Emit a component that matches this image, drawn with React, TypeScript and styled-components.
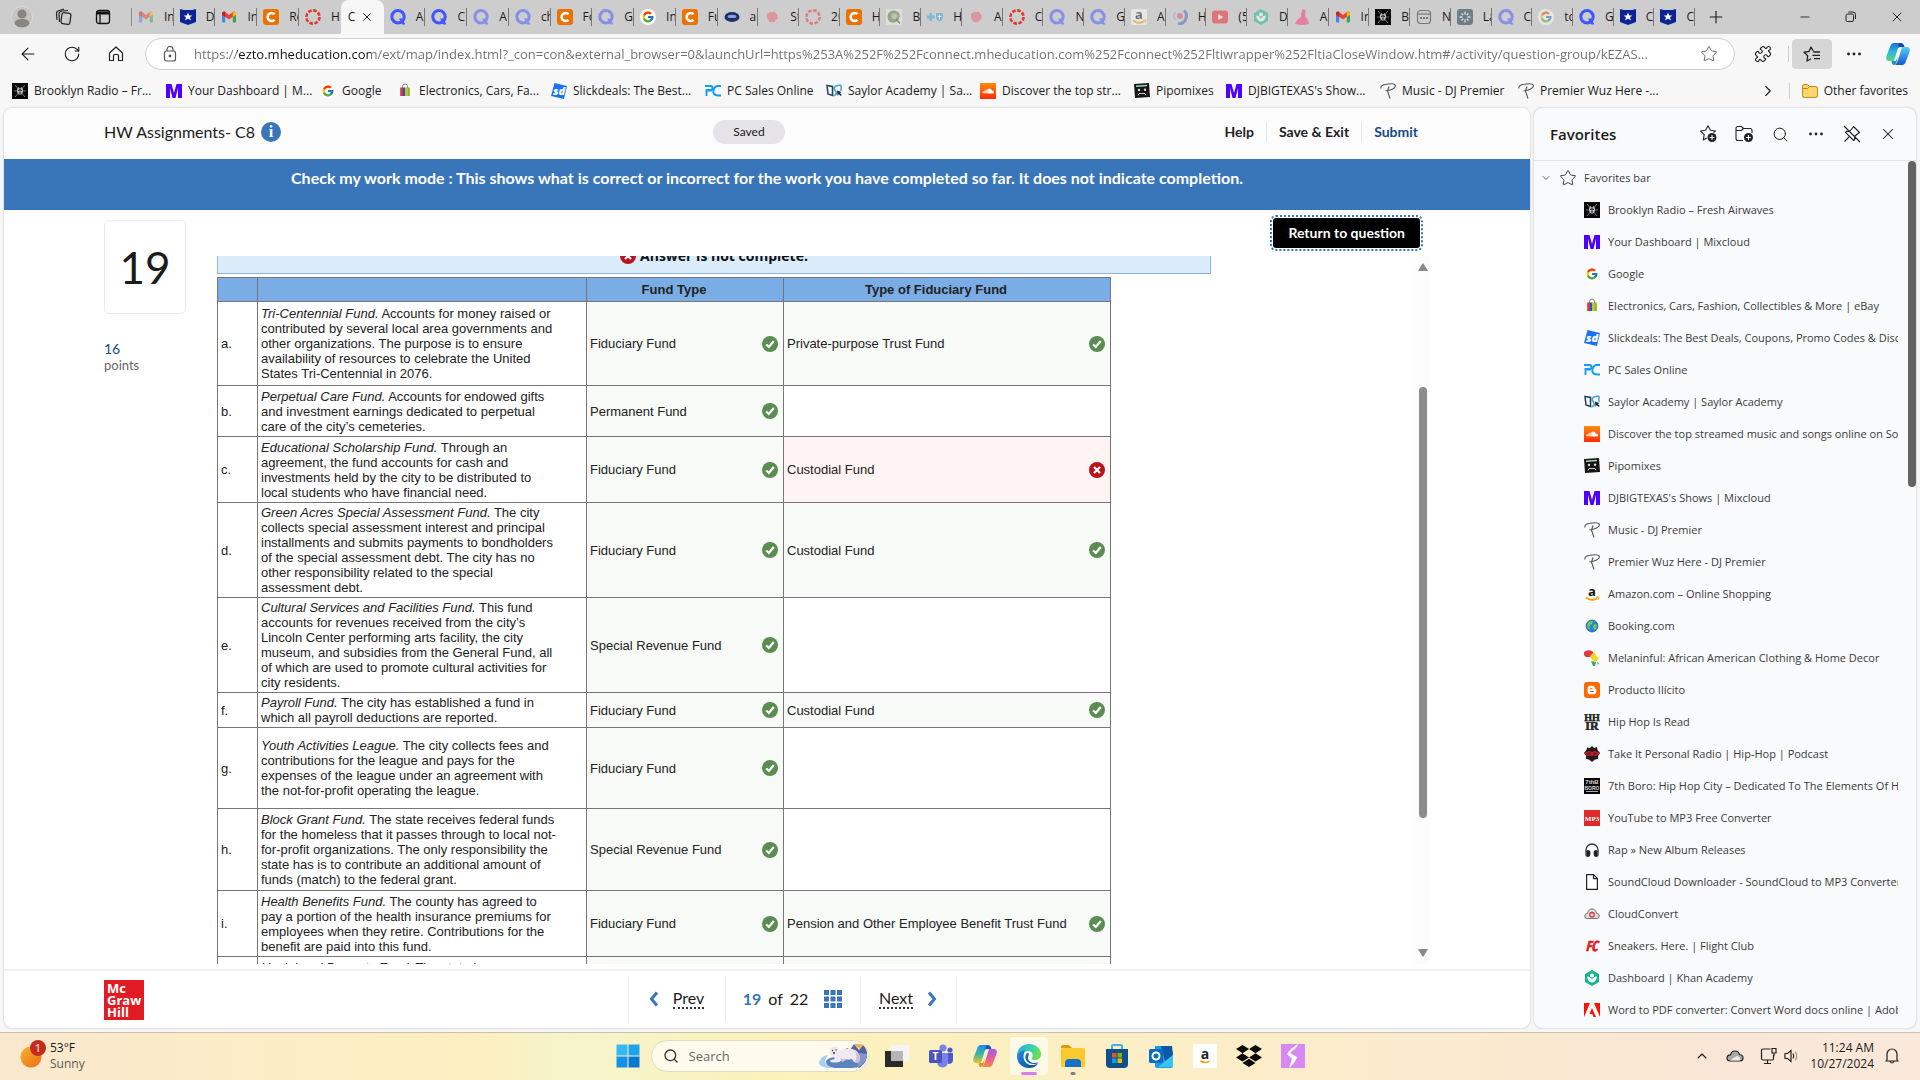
import React from "react";
import styled, { createGlobalStyle } from "styled-components";
import {
  ArrowLeft,
  ChevronDown,
  ChevronRight,
  ChevronUp,
  Headphones,
  Minus,
  Plus,
  Puzzle,
  RotateCw,
  Search,
  Star,
  X,
} from "lucide-react";
import { FcGoogle } from "react-icons/fc";
import { FaBloggerB, FaDropbox, FaSoundcloud } from "react-icons/fa";

const uiFont = `"Open Sans", "Noto Sans", sans-serif`;
const pageFont = `"Lato", "Open Sans", sans-serif`;
const tableFont = `"Liberation Sans", Arial, sans-serif`;

const GlobalStyle = createGlobalStyle`
  * { box-sizing: border-box; }
  body { margin: 0; background: #f7f7f7; color: #1b1b1b; font: 12px/16px ${uiFont}; }
  button { font: inherit; color: inherit; border: 0; padding: 0; background: none; cursor: pointer; }
  a { color: inherit; text-decoration: none; }
  input { font: inherit; border: 0; padding: 0; background: none; outline: 0; }
  h1, h2, p, ul { margin: 0; padding: 0; font: inherit; }
  ul { list-style: none; }
  svg { display: block; flex: none; }
`;

/* ---------- site icons ---------- */

type IconName =
  | "gmail" | "shield" | "chegg" | "canvas" | "quizlet" | "google" | "ellipse" | "brain"
  | "green" | "bcbs" | "amazon" | "swirl" | "youtube" | "khan" | "dress" | "brooklyn"
  | "note" | "grayapp" | "mixcloud" | "ebay" | "slick" | "pc" | "saylor" | "soundcloud"
  | "pipo" | "premier" | "globe" | "africa" | "blogger" | "hiphop" | "personal" | "boro"
  | "mp3" | "phones" | "file" | "cloud" | "flight" | "adobe";

const art: Record<IconName, React.ReactNode> = {
  gmail: (
    <>
      <path d="M1 4.5V12.5q0 1 1 1h2.2V6.5z" fill="#4285f4" />
      <path d="M15 4.5v8q0 1-1 1h-2.2V6.5z" fill="#34a853" />
      <path d="M1 4.6C1 2.7 3 2 4.2 3L8 6l3.8-3C13 2 15 2.7 15 4.6v1L8 10.6 1 5.6z" fill="#ea4335" />
      <path d="M11.8 3C13 2 15 2.7 15 4.6v1.2l-3.2 2.3z" fill="#fbbc04" />
      <path d="M4.2 3C3 2 1 2.7 1 4.6v1.2l3.2 2.3z" fill="#c5221f" />
    </>
  ),
  shield: (
    <>
      <path d="M0 0l4 1h8l4-1v13l-8 3-8-3z" fill="#0b2394" />
      <path d="M8 3.4l1.3 3h3.1L10 8.3l.9 3.2L8 9.6l-2.9 1.9.9-3.2-2.4-1.9h3.1z" fill="#fff" />
    </>
  ),
  chegg: (
    <>
      <rect width="16" height="16" rx="3" fill="#eb7100" />
      <path d="M11.5 5.2A4 4 0 1 0 11.5 10.8" fill="none" stroke="#fff" strokeWidth="2.6" />
    </>
  ),
  canvas: (
    <>
      <circle cx="8" cy="8" r="6.6" fill="none" stroke="#e4372e" strokeWidth="2.6" strokeDasharray="3.6 1.584" />
    </>
  ),
  quizlet: (
    <>
      <circle cx="8" cy="7.7" r="6.2" fill="none" stroke="#4255ff" strokeWidth="3" />
      <path d="M9 9.5h3.4l3 6h-3.2z" fill="#4255ff" />
    </>
  ),
  google: <><circle cx="8" cy="8" r="8" fill="#fff" /><FcGoogle x="1.5" y="1.5" size={13} /></>,
  ellipse: (
    <>
      <ellipse cx="8" cy="8" rx="7.5" ry="5" fill="#1d2f6f" />
      <ellipse cx="8" cy="7.4" rx="4.5" ry="1.6" fill="#8fa0d4" />
    </>
  ),
  brain: (
    <path d="M3 7q-1-3 2-3 1-2 3-1 3-1 4 1.500 2 .5 1.500 3 .5 3-2 3.500-1 3-3.500 2-3 1-3.500-2Q2.500 10 3 7z" fill="#e8626c" />
  ),
  green: (
    <>
      <rect width="16" height="16" fill="#eef0ea" />
      <path d="M3 12C-1 6 4 0 10 2c6 2 4 9 0 11-3 1-5 1-7-1z" fill="#5a8345" />
      <path d="M6.500 4.500q5-1 5 3.500-2 3-5 2-2-3 0-5.500z" fill="#a9bf98" />
      <path d="M10 10l4 4.500" stroke="#444" strokeWidth="1.500" />
    </>
  ),
  bcbs: (
    <>
      <path d="M2.500 4h2.500v2.500h2.500v3H5V12H2.500V9.500H0v-3h2.500z" fill="#33a0d8" />
      <path d="M9 4h7v4q0 3-3.500 4.500Q9 11 9 8z" fill="#33a0d8" />
      <path d="M12.500 5.500v5M10.800 7.500h3.400" stroke="#fff" strokeWidth="1" />
    </>
  ),
  amazon: (
    <>
      <rect width="16" height="16" rx="2" fill="#fff" />
      <text x="8" y="9.500" fontSize="13" fontWeight="700" textAnchor="middle" fill="#111" fontFamily="Open Sans">a</text>
      <path d="M2 11.500q6 4.500 11 .8" fill="none" stroke="#f90" strokeWidth="1.700" />
      <path d="M12 11.200l3-.2-.8 2.800" fill="none" stroke="#f90" strokeWidth="1" />
    </>
  ),
  swirl: (
    <>
      <path d="M12 1.500q4 4 1.500 9T6 14.500" fill="none" stroke="#3d68b8" strokeWidth="3" />
      <path d="M3.500 3q-3 4 0 8" fill="none" stroke="#9fb2dc" strokeWidth="2" />
      <circle cx="8" cy="7" r="3" fill="#e0506e" />
    </>
  ),
  youtube: (
    <>
      <rect y="1.500" width="16" height="13" rx="3" fill="#f01f26" />
      <path d="M6.200 5l5 3-5 3z" fill="#fff" />
    </>
  ),
  khan: (
    <>
      <path d="M8 0l7 4v8l-7 4-7-4V4z" fill="#14b58c" />
      <circle cx="8" cy="5.500" r="2" fill="#fff" />
      <path d="M3 6.500q1 6 5 6t5-6q-4 0-5 3.500-1-3.500-5-3.500z" fill="#fff" />
    </>
  ),
  dress: <path d="M9 0q3 0 2.500 4L11 7q3 3 4 8-6 2-14 0 2-5 6-7V4z" fill="#e77fa2" />,
  brooklyn: (
    <>
      <rect width="16" height="16" fill="#080808" />
      <path d="M3 2l10 12M13 2L3 14M2 8h12" stroke="#8a8a8a" strokeWidth="0.800" />
      <path d="M5 6l1.500-2L8 5.500 9.500 4 11 6v3l-1.500 2.500h-3L5 9z" fill="#bbb" />
      <path d="M6 7.300h1.500M8.500 7.300H10M7 10h2M8 5.500v3" stroke="#111" strokeWidth="1" />
    </>
  ),
  note: (
    <g fill="none" stroke="#777" strokeWidth="1.200">
      <rect x="1.500" y="1.500" width="13" height="13" rx="3" />
      <path d="M1.500 5h13" />
      <path d="M4 9h2M7 9h2M10 9h2" strokeWidth="1.800" />
    </g>
  ),
  grayapp: (
    <>
      <rect width="16" height="16" rx="3" fill="#6f7d87" />
      <path d="M8 2.500v3M8 10.500v3M2.500 8h3M10.500 8h3M4.500 4.500l1.800 1.800M9.700 9.700l1.800 1.800M11.500 4.500L9.700 6.300M6.300 9.700l-1.800 1.800" stroke="#d6dde2" strokeWidth="1.300" />
    </>
  ),
  mixcloud: <path d="M0 1h5.500L8 10l2.500-9H16v14h-4V5L9.500 15h-3L4 5v10H0z" fill="#5000ff" />,
  ebay: (
    <>
      <path d="M5.500 5V3.500a2.500 2.500 0 0 1 5 0V5" fill="none" stroke="#777" strokeWidth="0.900" />
      <path d="M3.200 4.500h2.800V13H3.200z" fill="#e53238" />
      <path d="M6 4.500h2.400V13H6z" fill="#0064d2" />
      <path d="M8.400 4.500h2V13h-2z" fill="#f5af02" />
      <path d="M10.400 4.500h2.400V13h-2.400z" fill="#86b817" />
    </>
  ),
  slick: (
    <>
      <path d="M3.500 0L16 3l-3 13L0 13z" fill="#1b72f2" />
      <text x="8" y="12" fontSize="11" fontWeight="800" fontStyle="italic" textAnchor="middle" fill="#fff" fontFamily="Open Sans">sd</text>
    </>
  ),
  pc: (
    <path d="M0 3h5.500q2 0 2 2t-2 2H1.500v6M16 3h-3q-3.500 0-4.500 4.500T13 12.500h3M1 7.500h6" fill="none" stroke="#129cf3" strokeWidth="1.900" />
  ),
  saylor: (
    <>
      <path d="M1 2.500l5.500 1v9L2 11z" fill="none" stroke="#26405a" strokeWidth="1.500" />
      <path d="M15 2L9.500 3Q7 5.500 9 7.500t1 4L7.500 13" fill="none" stroke="#4aa7cf" strokeWidth="1.700" />
      <path d="M15 2v6" stroke="#4aa7cf" strokeWidth="1.500" />
      <path d="M11 7.500l4.500 1.500-1.500 1 1.700 2-1 1-2-1.800-1.200 1.500z" fill="#1c3046" />
    </>
  ),
  soundcloud: (
    <>
      <defs>
        <linearGradient id="sc" x1="0" y1="0" x2="0" y2="1">
          <stop offset="0" stopColor="#ff8a10" /><stop offset="1" stopColor="#ff2a08" />
        </linearGradient>
      </defs>
      <rect width="16" height="16" fill="url(#sc)" />
      <FaSoundcloud x="2" y="2" size={12} color="#fff" />
    </>
  ),
  pipo: (
    <>
      <path d="M0 1l15-1 1 14-15 1z" fill="#161616" />
      <path d="M2 2.500l11-.8v1.500L2 4z" fill="#9fd8b4" />
      <circle cx="5" cy="7" r="1.200" fill="#ddd" />
      <circle cx="11" cy="6.700" r="1.200" fill="#ddd" />
      <path d="M4 12.500l1-2h6l1 1.800" fill="none" stroke="#ccc" strokeWidth="1" />
    </>
  ),
  premier: (
    <path d="M.8 5.500Q.5 2 6 1.300c5-.8 9-.3 9.400 1.200.3 2.500-4.400 5.200-9.900 5.200M9 3.500L7.500 8l2.500 7.500" fill="none" stroke="#555" strokeWidth="1.100" />
  ),
  globe: (
    <>
      <circle cx="8" cy="8" r="6" fill="#2f7fdc" />
      <path d="M4 5q3-3 5-2l-1 3-3 2 1 4Q2 10 4 5zM10 6l3 1-1 4-2 1-1-3z" fill="#6fce4a" />
      <circle cx="8" cy="8" r="6" fill="none" stroke="#1d6a9e" strokeWidth="0.800" />
    </>
  ),
  africa: (
    <>
      <path d="M0 2q3-3 8-1l2 3-4 3H2Q-1 5 0 2z" fill="#e0393e" />
      <path d="M6 6l4-4 3 5 2 1-3 4-4-2z" fill="#f4d322" />
      <path d="M7 11l5 1-1 4H9zM13 12l2 1-1 2z" fill="#43a35b" />
    </>
  ),
  blogger: (
    <>
      <rect width="16" height="16" rx="3" fill="#ff6a00" />
      <FaBloggerB x="3" y="3" size={10} color="#fff" />
    </>
  ),
  hiphop: (
    <g fontFamily="Liberation Serif" fontWeight="700" fontSize="10" fill="#222" stroke="#222" strokeWidth="0.500" textAnchor="middle">
      <text x="8" y="7">HH</text>
      <text x="8" y="15.500" fontSize="12">IR</text>
    </g>
  ),
  personal: (
    <>
      <path d="M8 0l2 2 3-1 .5 3L16 7l-2 3v3l-3 .5L8 16l-3-2.500L2 13l.2-3L0 7l2.500-3L3 1.500 6 2z" fill="#2a1718" />
      <path d="M0 7l5-2 3 1 3-1 5 2-4 3-4-.5L4 10z" fill="#c0202b" />
      <path d="M4 7.500h2.500M9.500 7.500H12" stroke="#2a1718" strokeWidth="1.500" />
    </>
  ),
  boro: (
    <>
      <rect width="16" height="16" fill="#050505" />
      <g fontFamily="Liberation Sans" fontWeight="700" fontSize="6" fill="#ddd" textAnchor="middle">
        <text x="8" y="6">7thB</text>
        <text x="8" y="11.500" fontSize="5">BORO</text>
      </g>
      <path d="M2 13.500h12" stroke="#aaa" />
    </>
  ),
  mp3: (
    <>
      <rect width="16" height="16" fill="#e02a2a" />
      <text x="8" y="10.500" fontSize="7" fontWeight="700" textAnchor="middle" fill="#fff" fontFamily="Liberation Serif">MP3</text>
    </>
  ),
  phones: (
    <>
      <Headphones width="16" height="16" color="#333" />
      <path d="M3.500 8q3 0 3 3t-2.500 4Q1 13 3.500 8zM12.500 8q-3 0-3 3t2.500 4q3-2 .5-7z" fill="#222" />
    </>
  ),
  file: <path d="M2.600.6h7l3.800 3.800v11H2.600zM9.500.6v4h4" fill="#fff" stroke="#222" strokeWidth="1.200" strokeLinejoin="round" />,
  cloud: (
    <>
      <path d="M3 12.500Q.5 12.500.7 10 1 7.500 3.500 7.300 4.500 3 8 3t4.500 4.300q2.700.2 2.800 2.700 0 2.500-2.300 2.500z" fill="#ddd" stroke="#666" strokeWidth="0.900" />
      <circle cx="8" cy="8.700" r="2.200" fill="none" stroke="#d5393f" strokeWidth="1.300" />
    </>
  ),
  flight: (
    <text x="7.500" y="13" fontSize="14" fontWeight="800" fontStyle="italic" textAnchor="middle" fill="#e11b22" stroke="#e11b22" strokeWidth="0.600" fontFamily="Open Sans Condensed, Open Sans">FC</text>
  ),
  adobe: <path d="M0 1h6L0 15zM16 1h-6l6 14zM8 6l4 9H9.500l-1.200-3H5.500z" fill="#fa1205" />,
};

const Favicon = styled.svg.attrs({ viewBox: "0 0 16 16", "aria-hidden": true })<{ $faded?: boolean }>`
  width: 16px;
  height: 16px;
  opacity: ${(p) => (p.$faded ? 0.5 : 1)};
`;

const Site = ({ name, faded }: { name: IconName; faded?: boolean }) => (
  <Favicon $faded={faded}>{art[name]}</Favicon>
);

/* ---------- browser chrome ---------- */

const Shell = styled.div`
  display: flex;
  flex-direction: column;
  height: 100vh;
  overflow: hidden;
`;

const TabStrip = styled.header`
  display: flex;
  height: 34px;
  background: #cdcdcd;
`;

const StripTools = styled.div`
  display: flex;
  align-items: center;
  gap: 22px;
  width: 132px;
  padding-left: 11px;
  border-right: 1px solid #8b8b8b;
  margin: 8px 0;
`;

const TabRow = styled.nav`
  display: flex;
  flex: 0 1 auto;
  min-width: 0;
`;

const Tab = styled.a<{ $wide: boolean; $last?: boolean }>`
  display: flex;
  align-items: center;
  gap: 10px;
  flex: 0 1 ${(p) => (p.$wide ? 42 : 41)}px;
  min-width: 0;
  margin: 8px 0;
  padding-left: 6px;
  overflow: hidden;
  white-space: nowrap;
  border-right: 1px solid ${(p) => (p.$last ? "transparent" : "#777")};
`;

const ActiveTab = styled.div`
  display: flex;
  align-items: center;
  justify-content: space-between;
  flex: 0 0 43px;
  padding: 0 10px 0 7px;
  border-radius: 8px 8px 0 0;
  background: #f7f7f7;
`;

const WindowControls = styled.div`
  display: flex;
  margin-left: auto;
`;

const StripButton = styled.button<{ $width: number }>`
  display: flex;
  align-items: center;
  justify-content: center;
  width: ${(p) => p.$width}px;
  height: 34px;
`;

const Toolbar = styled.div`
  display: flex;
  align-items: center;
  height: 40px;
  padding-left: 6px;
`;

const ToolButton = styled.button<{ $active?: boolean }>`
  display: flex;
  align-items: center;
  justify-content: center;
  flex: none;
  width: ${(p) => (p.$active ? 40 : 44)}px;
  height: 30px;
  border-radius: 4px;
  background: ${(p) => (p.$active ? "#d6d6d6" : "transparent")};
`;

const AddressBox = styled.label`
  display: flex;
  align-items: center;
  flex: 1;
  gap: 16px;
  min-width: 0;
  height: 32px;
  margin: 0 6px 0 7px;
  padding: 0 16px;
  border: 1px solid #cfcfcf;
  border-radius: 16px;
  background: #fff;
`;

const AddressInput = styled.input`
  flex: 1;
  min-width: 0;
  font-size: 13px;
  line-height: 20px;
  color: #6b6b6b;
  background: linear-gradient(to right, #6f6f6f 43px, #111 43px, #111 177px, #6f6f6f 177px);
  background-clip: text;
  -webkit-background-clip: text;
  -webkit-text-fill-color: transparent;
`;

const Rule = styled.span<{ $height: number; $gap: number }>`
  flex: none;
  width: 1px;
  height: ${(p) => p.$height}px;
  margin: 0 ${(p) => p.$gap}px;
  background: #d0d0d0;
`;

const BookmarkBar = styled.nav`
  display: flex;
  align-items: center;
  height: 34px;
  padding: 0 12px;
`;

const Bookmark = styled.a<{ $width: number }>`
  display: flex;
  align-items: center;
  gap: 6px;
  flex: 0 1 ${(p) => p.$width}px;
  min-width: 0;
  overflow: hidden;
  white-space: nowrap;
`;

const BarEnd = styled.div`
  display: flex;
  align-items: center;
  margin-left: auto;
`;

const FolderLink = styled.button`
  display: flex;
  align-items: center;
  gap: 6px;
`;

/* ---------- assignment page ---------- */

const Workspace = styled.main`
  display: flex;
  flex: 1;
  gap: 4px;
  min-height: 0;
  padding: 0 4px 4px;
`;

const Page = styled.section`
  display: flex;
  flex-direction: column;
  flex: 1;
  min-width: 0;
  overflow: hidden;
  border-radius: 8px;
  background: #fff;
  box-shadow: 0 0 2px #aaa;
  font-family: ${pageFont};
`;

const PageHeader = styled.header`
  display: flex;
  align-items: center;
  justify-content: space-between;
  height: 51px;
  flex: none;
  padding: 0 112px 4px 100px;
  background: #fcfcfc;
`;

const HeaderSide = styled.div<{ $end?: boolean }>`
  display: flex;
  align-items: center;
  flex: 1 1 0;
  justify-content: ${(p) => (p.$end ? "flex-end" : "flex-start")};
`;

const Title = styled.h1`
  margin-right: 6px;
  font-size: 16px;
  line-height: 20px;
`;

const InfoButton = styled.button`
  width: 20px;
  height: 20px;
  border-radius: 10px;
  background: #3a75b9;
  color: #fff;
  font: 700 16px/20px "Liberation Serif", serif;
`;

const SavedPill = styled.span`
  margin-right: 24px;
  padding: 0 20px;
  border-radius: 12px;
  background: #e5e3e7;
  font-size: 12px;
  line-height: 24px;
`;

const HeaderAction = styled.button<{ $blue?: boolean }>`
  padding: 0 12px;
  border-left: 1px solid #e6e6e6;
  font-size: 14px;
  font-weight: 700;
  line-height: 20px;
  color: ${(p) => (p.$blue ? "#164a8c" : "#222")};
  &:first-child { border-left: 0; }
  &:last-child { padding-right: 0; }
`;

const Banner = styled.p`
  flex: none;
  height: 51px;
  padding-top: 9px;
  background: #3875b9;
  color: #fff;
  text-align: center;
  font-size: 16px;
  font-weight: 700;
  line-height: 20px;
`;

const Question = styled.div`
  display: flex;
  flex: 1;
  gap: 31px;
  min-height: 0;
  padding: 0 100px 5px;
`;

const QuestionInfo = styled.aside`
  flex: none;
  width: 82px;
  padding-top: 10px;
`;

const NumberBox = styled.div`
  display: flex;
  align-items: center;
  justify-content: center;
  height: 94px;
  margin-bottom: 26px;
  border: 1px solid #ececec;
  border-radius: 5px;
  font-size: 44px;
`;

const Points = styled.p<{ $strong?: boolean }>`
  font-size: ${(p) => (p.$strong ? 14 : 13)}px;
  line-height: 17px;
  color: ${(p) => (p.$strong ? "#164a8c" : "#666")};
`;

const QuestionBody = styled.div`
  display: flex;
  flex-direction: column;
  flex: 1;
  min-width: 0;
`;

const ReturnRow = styled.div`
  display: flex;
  justify-content: flex-end;
  flex: none;
  height: 46px;
  padding: 8px 10px 8px 0;
`;

const ReturnButton = styled.button`
  padding: 0 15px;
  border-radius: 3px;
  outline: 2px dotted #3875b9;
  outline-offset: 1px;
  background: #000;
  color: #fff;
  font-size: 14px;
  font-weight: 700;
`;

const Scroller = styled.div`
  display: flex;
  justify-content: space-between;
  flex: 1;
  min-height: 0;
`;

const ScrollContent = styled.div`
  flex: 0 1 994px;
  min-width: 0;
  overflow: hidden;
`;

const Alert = styled.p`
  display: flex;
  align-items: center;
  justify-content: center;
  gap: 4px;
  height: 36px;
  margin: -18px 0 3px;
  border: 1px solid #8fb4dc;
  background: #daecfa;
  font: 700 14px/20px ${uiFont};
  color: #111;
`;

const ScrollTrack = styled.div`
  display: flex;
  flex-direction: column;
  align-items: center;
  flex: none;
  width: 15px;
  padding: 7px 0;
  background: #fcfcfc;
`;

const ScrollThumb = styled.div`
  width: 8px;
  margin: 116px 0 auto;
  flex: 0 0 431px;
  border-radius: 4px;
  background: #8c8c8c;
`;

const FundTable = styled.table`
  width: 893px;
  border-collapse: collapse;
  table-layout: fixed;
  font: 13px/15px ${tableFont};
  color: #222;
`;

const HeadCell = styled.th<{ $width: number }>`
  width: ${(p) => p.$width}px;
  height: 24px;
  padding: 0 22px 0 0;
  border: 1px solid #767676;
  background: #7aace6;
`;

const FundRow = styled.tr<{ $height: number }>`
  height: ${(p) => p.$height}px;
`;

const TextCell = styled.td`
  padding: 0 26px 0 3px;
  border: 1px solid #767676;
  &:first-child { padding-right: 0; }
`;

const AnswerCell = styled.td<{ $state?: "right" | "wrong" }>`
  padding: 0 5px 0 3px;
  border: 1px solid #767676;
  background: ${(p) =>
    p.$state === "right" ? "#f7faf7" : p.$state === "wrong" ? "#fff4f3" : "#fff"};
`;

const Answer = styled.div`
  display: flex;
  align-items: center;
  justify-content: space-between;
`;

const PageFooter = styled.footer`
  display: flex;
  align-items: center;
  flex: none;
  height: 59px;
  padding: 0 90px 0 100px;
  border-top: 2px solid #f0f0f0;
`;

const Brand = styled.a`
  width: 40px;
  height: 40px;
  padding: 2px 0 0 3px;
  background: #e21a23;
  color: #fff;
  font: 700 13px/12px ${uiFont};
`;

const Pager = styled.nav`
  display: flex;
  justify-content: center;
  flex: 1;
  padding-bottom: 2px;
`;

const PagerCell = styled.div<{ $width: number }>`
  display: flex;
  align-items: center;
  justify-content: center;
  gap: 16px;
  width: ${(p) => p.$width}px;
  height: 44px;
  border-left: 1px solid #eee;
  font-size: 16px;
  &:last-child { border-right: 1px solid #eee; }
`;

const PagerButton = styled.button`
  display: flex;
  align-items: center;
  gap: 14px;
  line-height: 20px;
`;

const Dotted = styled.span`
  border-bottom: 2px dotted #333;
  line-height: 18px;
`;

const Count = styled.span`
  display: flex;
  gap: 7px;
`;

const Current = styled.b`
  color: #3875b9;
`;

/* ---------- favorites pane ---------- */

const Pane = styled.aside`
  display: flex;
  flex-direction: column;
  flex: none;
  width: 382px;
  overflow: hidden;
  border-radius: 8px;
  background: #f9fafc;
  box-shadow: 0 0 2px #aaa;
`;

const PaneHeader = styled.header`
  display: flex;
  align-items: center;
  flex: none;
  height: 53px;
  padding: 0 10px 0 16px;
  border-bottom: 1px solid #e3e3e3;
`;

const PaneTitle = styled.h2`
  margin-right: auto;
  font-size: 15px;
  font-weight: 600;
  line-height: 20px;
`;

const PaneButton = styled.button`
  display: flex;
  align-items: center;
  justify-content: center;
  width: 36px;
  height: 32px;
`;

const PaneBody = styled.div`
  display: flex;
  flex: 1;
  min-height: 0;
`;

const FavoriteList = styled.ul`
  flex: 1;
  min-width: 0;
  padding-right: 10px;
  overflow: hidden;
  font-size: 11px;
`;

const Favorite = styled.li`
  padding-left: 50px;
`;

const FavoriteLink = styled.a`
  display: flex;
  align-items: center;
  gap: 8px;
  height: 32px;
  overflow: hidden;
  white-space: nowrap;
  color: #3a3a3a;
`;

const FolderToggle = styled.button`
  display: flex;
  align-items: center;
  gap: 7px;
  height: 33px;
  padding-left: 6px;
  color: #3a3a3a;
`;

const PaneThumb = styled.div`
  flex: none;
  width: 8px;
  height: 326px;
  border-radius: 4px;
  background: #636363;
`;

/* ---------- taskbar ---------- */

const Taskbar = styled.footer`
  display: flex;
  align-items: center;
  flex: none;
  height: 48px;
  padding-bottom: 2px;
  border-top: 1px solid #c9c2ae;
  background: linear-gradient(90deg, #fae8cd 0%, #fdefc1 25%, #f5f4cc 30%, #fbf2bb 40%, #fcedc9 65%, #f9e6d6 90%, #fae9da 100%);
`;

const TaskSide = styled.div<{ $end?: boolean }>`
  display: flex;
  align-items: center;
  flex: 1 1 0;
  gap: ${(p) => (p.$end ? 10 : 3)}px;
  padding: 0 20px 0 19px;
  justify-content: ${(p) => (p.$end ? "flex-end" : "flex-start")};
`;

const Stack = styled.div<{ $end?: boolean }>`
  text-align: ${(p) => (p.$end ? "right" : "left")};
  white-space: nowrap;
`;

const Muted = styled.div`
  color: #5d5a52;
`;

const TaskApps = styled.nav`
  display: flex;
  align-items: center;
`;

const AppButton = styled.button<{ $active?: boolean }>`
  display: flex;
  align-items: center;
  justify-content: center;
  width: 38px;
  height: 38px;
  margin: 0 3px;
  border-radius: 4px;
  background: ${(p) => (p.$active ? "rgba(255, 255, 255, 0.6)" : "none")};
`;

const AppArt = styled.svg.attrs({ viewBox: "0 0 24 24", "aria-hidden": true })`
  width: 24px;
  height: 24px;
  overflow: visible;
`;

const SearchBox = styled.label`
  display: flex;
  align-items: center;
  gap: 10px;
  width: 218px;
  height: 32px;
  margin: 0 6px 0 1px;
  padding-left: 11px;
  border: 1px solid #e3dcc4;
  border-radius: 16px;
  background: #fefbec;
`;

const SearchInput = styled.input`
  flex: 1;
  min-width: 0;
  font-size: 13px;
  &::placeholder { color: #666; opacity: 1; }
`;

const HiddenLabel = styled.span`
  position: absolute;
  width: 1px;
  height: 1px;
  overflow: hidden;
  clip-path: inset(50%);
`;

/* ---------- data ---------- */

type TabInfo = [IconName, string, boolean?];

const tabsBefore: TabInfo[] = [
  ["gmail", "In", true], ["shield", "D"], ["gmail", "In"], ["chegg", "Re"], ["canvas", "H"],
];

const tabsAfter: TabInfo[] = [
  ["quizlet", "A"], ["quizlet", "C"], ["quizlet", "A", true], ["quizlet", "ch", true],
  ["chegg", "Fo"], ["quizlet", "G", true], ["google", "In"], ["chegg", "Fu"],
  ["ellipse", "a"], ["brain", "St", true], ["canvas", "20", true], ["chegg", "H"],
  ["green", "B", true], ["bcbs", "H", true], ["brain", "A", true], ["canvas", "C"],
  ["quizlet", "N", true], ["quizlet", "G", true], ["amazon", "A", true], ["swirl", "H", true],
  ["youtube", "(5", true], ["khan", "D", true], ["dress", "A"], ["gmail", "In"],
  ["brooklyn", "B"], ["note", "N"], ["grayapp", "La"], ["quizlet", "C", true],
  ["google", "to", true], ["quizlet", "G"], ["shield", "C"], ["shield", "C"],
];

const bookmarks: [IconName, string, number][] = [
  ["brooklyn", "Brooklyn Radio – Fr...", 154],
  ["mixcloud", "Your Dashboard | M...", 154],
  ["google", "Google", 77],
  ["ebay", "Electronics, Cars, Fa...", 154],
  ["slick", "Slickdeals: The Best...", 154],
  ["pc", "PC Sales Online", 121],
  ["saylor", "Saylor Academy | Sa...", 154],
  ["soundcloud", "Discover the top str...", 154],
  ["pipo", "Pipomixes", 92],
  ["mixcloud", "DJBIGTEXAS's Show...", 154],
  ["premier", "Music - DJ Premier", 138],
  ["premier", "Premier Wuz Here -...", 154],
];

const favorites: [IconName, string][] = [
  ["brooklyn", "Brooklyn Radio – Fresh Airwaves"],
  ["mixcloud", "Your Dashboard | Mixcloud"],
  ["google", "Google"],
  ["ebay", "Electronics, Cars, Fashion, Collectibles & More | eBay"],
  ["slick", "Slickdeals: The Best Deals, Coupons, Promo Codes & Discounts"],
  ["pc", "PC Sales Online"],
  ["saylor", "Saylor Academy | Saylor Academy"],
  ["soundcloud", "Discover the top streamed music and songs online on SoundCloud"],
  ["pipo", "Pipomixes"],
  ["mixcloud", "DJBIGTEXAS's Shows | Mixcloud"],
  ["premier", "Music - DJ Premier"],
  ["premier", "Premier Wuz Here - DJ Premier"],
  ["amazon", "Amazon.com – Online Shopping"],
  ["globe", "Booking.com"],
  ["africa", "Melaninful: African American Clothing & Home Decor"],
  ["blogger", "Producto Ilícito"],
  ["hiphop", "Hip Hop Is Read"],
  ["personal", "Take It Personal Radio | Hip-Hop | Podcast"],
  ["boro", "7th Boro: Hip Hop City – Dedicated To The Elements Of Hip Hop"],
  ["mp3", "YouTube to MP3 Free Converter"],
  ["phones", "Rap » New Album Releases"],
  ["file", "SoundCloud Downloader - SoundCloud to MP3 Converter"],
  ["cloud", "CloudConvert"],
  ["flight", "Sneakers. Here. | Flight Club"],
  ["khan", "Dashboard | Khan Academy"],
  ["adobe", "Word to PDF converter: Convert Word docs online | Adobe"],
];

interface Fund {
  id: string;
  name: string;
  text: string;
  type: string;
  fiduciary?: string;
  wrong?: boolean;
  height: number;
}

const funds: Fund[] = [
  { id: "a.", name: "Tri-Centennial Fund.", text: "Accounts for money raised or contributed by several local area governments and other organizations. The purpose is to ensure availability of resources to celebrate the United States Tri-Centennial in 2076.", type: "Fiduciary Fund", fiduciary: "Private-purpose Trust Fund", height: 84 },
  { id: "b.", name: "Perpetual Care Fund.", text: "Accounts for endowed gifts and investment earnings dedicated to perpetual care of the city’s cemeteries.", type: "Permanent Fund", height: 51 },
  { id: "c.", name: "Educational Scholarship Fund.", text: "Through an agreement, the fund accounts for cash and investments held by the city to be distributed to local students who have financial need.", type: "Fiduciary Fund", fiduciary: "Custodial Fund", wrong: true, height: 66 },
  { id: "d.", name: "Green Acres Special Assessment Fund.", text: "The city collects special assessment interest and principal installments and submits payments to bondholders of the special assessment debt. The city has no other responsibility related to the special assessment debt.", type: "Fiduciary Fund", fiduciary: "Custodial Fund", height: 95 },
  { id: "e.", name: "Cultural Services and Facilities Fund.", text: "This fund accounts for revenues received from the city’s Lincoln Center performing arts facility, the city museum, and subsidies from the General Fund, all of which are used to promote cultural activities for city residents.", type: "Special Revenue Fund", height: 95 },
  { id: "f.", name: "Payroll Fund.", text: "The city has established a fund in which all payroll deductions are reported.", type: "Fiduciary Fund", fiduciary: "Custodial Fund", height: 35 },
  { id: "g.", name: "Youth Activities League.", text: "The city collects fees and contributions for the league and pays for the expenses of the league under an agreement with the not-for-profit operating the league.", type: "Fiduciary Fund", height: 81 },
  { id: "h.", name: "Block Grant Fund.", text: "The state receives federal funds for the homeless that it passes through to local not-for-profit organizations. The only responsibility the state has is to contribute an additional amount of funds (match) to the federal grant.", type: "Special Revenue Fund", height: 82 },
  { id: "i.", name: "Health Benefits Fund.", text: "The county has agreed to pay a portion of the health insurance premiums for employees when they retire. Contributions for the benefit are paid into this fund.", type: "Fiduciary Fund", fiduciary: "Pension and Other Employee Benefit Trust Fund", height: 66 },
];

const url =
  "https://ezto.mheducation.com/ext/map/index.html?_con=con&external_browser=0&launchUrl=https%253A%252F%252Fconnect.mheducation.com%252Fconnect%252Fltiwrapper%252FltiaCloseWindow.htm#/activity/question-group/kEZAS...";

/* ---------- small drawings ---------- */

const Mark = ({ wrong }: { wrong?: boolean }) => (
  <svg width="16" height="16" viewBox="0 0 16 16" role="img" aria-label={wrong ? "incorrect" : "correct"}>
    <circle cx="8" cy="8" r="8" fill={wrong ? "#b8121b" : "#5b8c51"} />
    <path
      d={wrong ? "M5 5l6 6M11 5l-6 6" : "M4.200 8.500l2.600 2.500 5-6"}
      fill="none"
      stroke="#fff"
      strokeWidth="2.200"
    />
  </svg>
);

const Chevron = ({ flip }: { flip?: boolean }) => (
  <svg width="10" height="16" viewBox="0 0 10 16" aria-hidden="true">
    <path d={flip ? "M2 1.500L7.500 8 2 14.500" : "M8 1.500L2.500 8 8 14.500"} fill="none" stroke="#3875b9" strokeWidth="3" />
  </svg>
);

const Arrow = ({ down }: { down?: boolean }) => (
  <svg width="10" height="8" viewBox="0 0 10 8" aria-hidden="true">
    <path d={down ? "M0 0h10L5.500 7.500h-1z" : "M0 8h10L5.500 .5h-1z"} fill="#8a8a8a" />
  </svg>
);

const Dots = () => (
  <svg width="16" height="16" viewBox="0 0 16 16" aria-hidden="true" fill="#222">
    <circle cx="2.500" cy="8" r="1.400" />
    <circle cx="8" cy="8" r="1.400" />
    <circle cx="13.500" cy="8" r="1.400" />
  </svg>
);

const Restore = () => (
  <svg width="12" height="12" viewBox="0 0 12 12" aria-hidden="true" fill="none" stroke="#222">
    <rect x="1" y="3" width="7.500" height="7.500" rx="1.500" />
    <path d="M3.500 1h4.500q2.500 0 2.500 2.500V8" />
  </svg>
);

const CopilotArt = () => (
  <>
    <defs>
      <linearGradient id="cpA" x1="0" y1="0" x2="0" y2="1">
        <stop offset="0" stopColor="#1e8df0" /><stop offset="0.5" stopColor="#38b6a5" /><stop offset="1" stopColor="#e8c52e" />
      </linearGradient>
      <linearGradient id="cpB" x1="0" y1="0" x2="0" y2="1">
        <stop offset="0" stopColor="#9a5cf0" /><stop offset="0.6" stopColor="#ee5d91" /><stop offset="1" stopColor="#f98b3c" />
      </linearGradient>
    </defs>
    <path d="M15 1H8Q5 1 4 5L.5 14q-1.500 5 3 5H8l4-13q.8-3 3-5z" fill="url(#cpA)" />
    <path d="M9 23h7q3 0 4-4l3.500-9q1.500-5-3-5H16l-4 13q-.8 3-3 5z" fill="url(#cpB)" />
    <path d="M13 1h2q2.500 0 3.500 4H14q-2 0-2.500 2z" fill="#1856c9" />
    <path d="M5.500 19H10l1.500-4q-.5 8-4 8-1.500 0-2-4z" fill="#f08a2c" />
  </>
);

const ToolbarCopilotArt = () => (
  <>
    <defs>
      <linearGradient id="tcA" x1="0" y1="0" x2="0" y2="1">
        <stop offset="0" stopColor="#1a6fd1" /><stop offset="0.5" stopColor="#2ab8dc" /><stop offset="1" stopColor="#5ad67b" />
      </linearGradient>
      <linearGradient id="tcB" x1="0" y1="0" x2="0" y2="1">
        <stop offset="0" stopColor="#58d0f0" /><stop offset="1" stopColor="#1557d6" />
      </linearGradient>
    </defs>
    <path d="M15 1H8Q5 1 4 5L.5 14q-1.500 5 3 5H8l4-13q.8-3 3-5z" fill="url(#tcA)" />
    <path d="M9 23h7q3 0 4-4l3.500-9q1.500-5-3-5H16l-4 13q-.8 3-3 5z" fill="url(#tcB)" />
    <path d="M13 1h2q2.500 0 3.500 4H14q-2 0-2.500 2z" fill="#1448a8" />
    <path d="M5.500 19H10l1.500-4q-.5 8-4 8-1.500 0-2-4z" fill="#1a8fb8" />
  </>
);

const EdgeArt = () => (
  <>
    <defs>
      <linearGradient id="edA" x1="0" y1="0" x2="1" y2="0.300">
        <stop offset="0" stopColor="#2aa6e8" /><stop offset="0.6" stopColor="#36cfb5" /><stop offset="1" stopColor="#68df4f" />
      </linearGradient>
      <linearGradient id="edB" x1="0" y1="0" x2="1" y2="1">
        <stop offset="0" stopColor="#1b8ee0" /><stop offset="1" stopColor="#0c4a94" />
      </linearGradient>
    </defs>
    <path d="M0 12C0 4 6 0 12 0c7 0 12 5 12 10 0 4-3 6-6 6-3 0-4-1-3-2 2-3 0-7-4-7-6 0-10 3-11 5z" fill="url(#edA)" />
    <path d="M0 12C1 8 5 6 9 6.500c-3 2-4 9 1 13 4 3 9 1 11 0-2 3-5 4.500-9 4.500C4 24 0 18 0 12z" fill="url(#edB)" />
    <path d="M10 9c-4 5 0 12 8 11 2 0 4-1.500 3-1.500-5 1.500-10-.5-10-5 0-2 1-3 1-4z" fill="#1466b8" />
  </>
);

const appArt: { label: string; art: React.ReactNode; active?: boolean }[] = [
  {
    label: "Task view",
    art: <><path d="M0 7h18v16H0z" fill="#2a2a2a" /><path d="M6 1h18v16H6z" fill="#f4f4f4" /><path d="M6 7h12v10H6z" fill="#b5b5b5" /></>,
  },
  {
    label: "Teams",
    art: (
      <>
        <circle cx="14" cy="4" r="3.600" fill="#7b83eb" /><circle cx="21" cy="6" r="2.600" fill="#5059c9" />
        <path d="M8 9h11v8q0 6-5.500 6.500Q8 23 8 17z" fill="#7b83eb" /><path d="M19 9h5v7q0 4-5 4z" fill="#5059c9" />
        <rect y="6" width="13" height="13" rx="1.500" fill="#4b53bc" />
        <text x="6.500" y="16" fontSize="10" fontWeight="700" textAnchor="middle" fill="#fff" fontFamily="Open Sans">T</text>
      </>
    ),
  },
  { label: "Copilot", art: <CopilotArt /> },
  { label: "Edge", active: true, art: <><EdgeArt /><rect x="4" y="28" width="16" height="3" rx="1.500" fill="#d67ff0" /></> },
  {
    label: "File Explorer",
    art: (
      <>
        <path d="M0 3q0-2 2-2h6l3 3H0z" fill="#d99a0b" /><rect y="4" width="24" height="19" rx="1.500" fill="#fdc82f" />
        <path d="M4 23v-4q0-4 4-4h8q4 0 4 4v4z" fill="#1472c6" /><rect x="9.500" y="28" width="5" height="3" rx="1.500" fill="#857e70" />
      </>
    ),
  },
  {
    label: "Store",
    art: (
      <>
        <path d="M7 6V2q0-1 1-1h8q1 0 1 1v4" fill="none" stroke="#3cb4e8" strokeWidth="2" />
        <path d="M1 5h22v15q0 4-4 4H5q-4 0-4-4z" fill="#0f4f8c" />
        <path d="M7 9h4.500v4.500H7z" fill="#f25022" /><path d="M12.500 9H17v4.500h-4.500z" fill="#7fba00" />
        <path d="M7 14.500h4.500V19H7z" fill="#00a4ef" /><path d="M12.500 14.500H17V19h-4.500z" fill="#ffb900" />
      </>
    ),
  },
  {
    label: "Outlook",
    art: (
      <>
        <path d="M6 2h13l5 6v14q0 2-2 2H8q-2 0-2-2z" fill="#1c9be6" /><path d="M12 2h11l1 9-8 6z" fill="#0c59a8" />
        <path d="M24 11v12H9z" fill="#35c4f3" /><rect y="5" width="14" height="14" rx="1.500" fill="#0f6cbd" />
        <circle cx="7" cy="12" r="3.500" fill="none" stroke="#fff" strokeWidth="2" />
      </>
    ),
  },
  {
    label: "Amazon",
    art: <><rect width="24" height="24" rx="1" fill="#fff" /><text x="12" y="15" fontSize="14" fontWeight="700" textAnchor="middle" fill="#222" fontFamily="Open Sans">a</text><path d="M7.500 17q5 3 9 0" fill="none" stroke="#f90" strokeWidth="1.500" /></>,
  },
  { label: "Dropbox", art: <FaDropbox size={26} x="-1" y="-1" color="#0a0a0a" /> },
  {
    label: "Shortcut",
    art: <><rect width="24" height="24" fill="#d888f3" /><path d="M17 0q-1 4-6 7l-2 2 7 4q-1 5-8 11l3-9-5-5q4-6 11-10z" fill="#fff" /></>,
  },
];

/* ---------- page ---------- */

const TabLink = ({ tab, wide, last }: { tab: TabInfo; wide: boolean; last?: boolean }) => (
  <Tab href="#" $wide={wide} $last={last}>
    <Site name={tab[0]} faded={tab[2]} />
    <span>{tab[1]}</span>
  </Tab>
);

const BrowserChrome = () => (
  <>
    <TabStrip>
      <StripTools>
        <svg width="22" height="22" viewBox="0 0 22 22" aria-hidden="true">
          <circle cx="11" cy="11" r="10.500" fill="#c5c3c0" stroke="#dcdad6" />
          <circle cx="11" cy="8" r="4.500" fill="#888480" />
          <path d="M3.500 18q0-5 7.500-5t7.500 5q-3 3.500-7.500 3.500T3.500 18z" fill="#888480" />
        </svg>
        <svg width="18" height="18" viewBox="0 0 18 18" aria-hidden="true" fill="none" stroke="#222" strokeWidth="1.200">
          <rect x="6.500" y="5" width="9" height="11" rx="2" transform="rotate(8 11 10)" />
          <path d="M4.500 14L4 6q0-2.500 3-3l6-.5M2 12L1.500 5.500Q1.500 3 4 2.500L9 1" />
        </svg>
        <svg width="16" height="16" viewBox="0 0 16 16" aria-hidden="true" fill="none" stroke="#111" strokeWidth="1.300">
          <rect x="1.500" y="1.500" width="13" height="13" rx="2.500" />
          <path d="M1.500 4h13" strokeWidth="3" />
          <path d="M5 5v9.500" />
        </svg>
      </StripTools>
      <TabRow aria-label="Tabs">
        {tabsBefore.map((t, i) => (
          <TabLink key={i} tab={t} wide last={i === 4} />
        ))}
        <ActiveTab>
          <span>C</span>
          <X size={14} strokeWidth={1.6} />
        </ActiveTab>
        {tabsAfter.map((t, i) => (
          <TabLink key={i} tab={t} wide={i < 8} />
        ))}
      </TabRow>
      <StripButton $width={42} aria-label="New tab"><Plus size={20} strokeWidth={1.3} /></StripButton>
      <WindowControls>
        <StripButton $width={46} aria-label="Minimize"><Minus size={14} strokeWidth={1.5} /></StripButton>
        <StripButton $width={46} aria-label="Restore"><Restore /></StripButton>
        <StripButton $width={46} aria-label="Close"><X size={16} strokeWidth={1.4} /></StripButton>
      </WindowControls>
    </TabStrip>
    <Toolbar>
      <ToolButton aria-label="Back"><ArrowLeft size={20} strokeWidth={1.3} /></ToolButton>
      <ToolButton aria-label="Refresh"><RotateCw size={18} strokeWidth={1.5} /></ToolButton>
      <ToolButton aria-label="Home">
        <svg width="16" height="16" viewBox="0 0 16 16" aria-hidden="true" fill="none" stroke="#222" strokeWidth="1.200" strokeLinejoin="round">
          <path d="M1.500 7L8 1l6.500 6v7.500h-4V9.500q0-1-1-1h-3q-1 0-1 1v5h-4z" />
        </svg>
      </ToolButton>
      <AddressBox>
        <svg width="16" height="16" viewBox="0 0 16 16" aria-hidden="true" fill="none" stroke="#555" strokeWidth="1.200">
          <rect x="2.500" y="5" width="11" height="10" rx="2" />
          <path d="M5 5V3.500a3 3 0 0 1 6 0V5" />
          <circle cx="8" cy="10" r="0.800" fill="#555" />
        </svg>
        <HiddenLabel>Address</HiddenLabel>
        <AddressInput defaultValue={url} />
        <Star size={18} strokeWidth={1.3} color="#666" />
      </AddressBox>
      <ToolButton aria-label="Extensions"><Puzzle size={18} strokeWidth={1.5} /></ToolButton>
      <Rule $height={16} $gap={3} />
      <ToolButton $active aria-label="Favorites">
        <svg width="18" height="16" viewBox="0 0 18 16" aria-hidden="true" fill="none" stroke="#222" strokeWidth="1.300" strokeLinejoin="round">
          <path d="M10.500 5.500L8 1 6 5.500l-5 .7L4.700 9.800 4 15l4-2.300" />
          <path d="M10.500 6H17M9.500 9.300H17M11 12.600h6" />
        </svg>
      </ToolButton>
      <ToolButton aria-label="Settings"><Dots /></ToolButton>
      <ToolButton aria-label="Copilot"><AppArt><ToolbarCopilotArt /></AppArt></ToolButton>
    </Toolbar>
    <BookmarkBar aria-label="Favorites bar">
      {bookmarks.map(([icon, text, width]) => (
        <Bookmark key={text} href="#" $width={width}>
          <Site name={icon} />
          <span>{text}</span>
        </Bookmark>
      ))}
      <BarEnd>
        <ChevronRight size={18} strokeWidth={1.5} />
        <Rule $height={16} $gap={12} />
        <FolderLink>
          <svg width="16" height="16" viewBox="0 0 16 16" aria-hidden="true">
            <path d="M.6 3q0-1.400 1.400-1.400h3.600l2 2H14q1.400 0 1.400 1.400v8q0 1.400-1.400 1.400H2Q.6 14.400.6 13z" fill="#ffd76e" stroke="#b88a13" />
            <path d="M.6 5.500h5l2-2" fill="none" stroke="#b88a13" />
          </svg>
          <span>Other favorites</span>
        </FolderLink>
      </BarEnd>
    </BookmarkBar>
  </>
);

const AssignmentPage = () => (
  <Page>
    <PageHeader>
      <HeaderSide>
        <Title>HW Assignments- C8</Title>
        <InfoButton aria-label="Assignment information">i</InfoButton>
      </HeaderSide>
      <SavedPill>Saved</SavedPill>
      <HeaderSide $end>
        <HeaderAction>Help</HeaderAction>
        <HeaderAction>Save &amp; Exit</HeaderAction>
        <HeaderAction $blue>Submit</HeaderAction>
      </HeaderSide>
    </PageHeader>
    <Banner>
      Check my work mode : This shows what is correct or incorrect for the work you have completed so far. It does not indicate completion.
    </Banner>
    <Question>
      <QuestionInfo>
        <NumberBox>19</NumberBox>
        <Points $strong>16</Points>
        <Points>points</Points>
      </QuestionInfo>
      <QuestionBody>
        <ReturnRow><ReturnButton>Return to question</ReturnButton></ReturnRow>
        <Scroller>
          <ScrollContent>
            <Alert><Mark wrong /> Answer is not complete.</Alert>
            <FundTable>
              <thead>
                <tr>
                  <HeadCell $width={40} aria-label="Item" />
                  <HeadCell $width={329} aria-label="Description" />
                  <HeadCell $width={197}>Fund Type</HeadCell>
                  <HeadCell $width={327}>Type of Fiduciary Fund</HeadCell>
                </tr>
              </thead>
              <tbody>
                {funds.map((f) => (
                  <FundRow key={f.id} $height={f.height}>
                    <TextCell>{f.id}</TextCell>
                    <TextCell><i>{f.name}</i> {f.text}</TextCell>
                    <AnswerCell $state="right"><Answer>{f.type}<Mark /></Answer></AnswerCell>
                    <AnswerCell $state={f.fiduciary ? (f.wrong ? "wrong" : "right") : undefined}>
                      {f.fiduciary && <Answer>{f.fiduciary}<Mark wrong={f.wrong} /></Answer>}
                    </AnswerCell>
                  </FundRow>
                ))}
                <FundRow $height={22}>
                  <TextCell />
                  <TextCell><i>Unclaimed Property Fund.</i> The state has</TextCell>
                  <AnswerCell $state="right" />
                  <AnswerCell $state="right" />
                </FundRow>
              </tbody>
            </FundTable>
          </ScrollContent>
          <ScrollTrack>
            <Arrow />
            <ScrollThumb />
            <Arrow down />
          </ScrollTrack>
        </Scroller>
      </QuestionBody>
    </Question>
    <PageFooter>
      <Brand href="#">Mc<br />Graw<br />Hill</Brand>
      <Pager aria-label="Questions">
        <PagerCell $width={97}>
          <PagerButton><Chevron /><Dotted>Prev</Dotted></PagerButton>
        </PagerCell>
        <PagerCell $width={135}>
          <Count><Current>19</Current><span>of</span><span>22</span></Count>
          <svg width="18" height="18" viewBox="0 0 18 18" aria-hidden="true" fill="#3875b9">
            {[0, 6.5, 13].map((y) => [0, 6.5, 13].map((x) => <rect key={`${x}-${y}`} x={x} y={y} width="5" height="5" />))}
          </svg>
        </PagerCell>
        <PagerCell $width={97}>
          <PagerButton><Dotted>Next</Dotted><Chevron flip /></PagerButton>
        </PagerCell>
      </Pager>
    </PageFooter>
  </Page>
);

const FavoritesPane = () => (
  <Pane>
    <PaneHeader>
      <PaneTitle>Favorites</PaneTitle>
      <PaneButton aria-label="Add favorite">
        <svg width="18" height="18" viewBox="0 0 18 18" aria-hidden="true">
          <path d="M14.500 7.500L16.500 6l-5-.7L9 .8 6.500 5.300l-5 .7 3.700 3.600L4.300 15l3.500-2" fill="none" stroke="#222" strokeWidth="1.100" strokeLinejoin="round" />
          <circle cx="13" cy="12.500" r="4.500" fill="#222" />
          <path d="M13 10v5M10.500 12.500h5" stroke="#fff" />
        </svg>
      </PaneButton>
      <PaneButton aria-label="Add folder">
        <svg width="18" height="18" viewBox="0 0 18 18" aria-hidden="true">
          <path d="M8 15.500H3q-2 0-2-2v-10q0-2 2-2h3.500L8.500 3.500H15q2 0 2 2V8M1 5.500h5.500l2-2" fill="none" stroke="#222" strokeWidth="1.100" />
          <circle cx="13.500" cy="12.500" r="4.500" fill="#222" />
          <path d="M13.500 10v5M11 12.500h5" stroke="#fff" />
        </svg>
      </PaneButton>
      <PaneButton aria-label="Search favorites"><Search size={17} strokeWidth={1.4} /></PaneButton>
      <PaneButton aria-label="More options"><Dots /></PaneButton>
      <PaneButton aria-label="Unpin favorites">
        <svg width="18" height="18" viewBox="0 0 18 18" aria-hidden="true" fill="none" stroke="#222" strokeWidth="1.100" strokeLinejoin="round">
          <path d="M10.500 1.500l6 6-1.500 1-3.500 3 .2 3-1 1-8.200-8.200 1-1 3 .2 3-3.500zM6 12l-4.500 4.500M1 1l16 16" />
        </svg>
      </PaneButton>
      <PaneButton aria-label="Close favorites"><X size={18} strokeWidth={1.4} /></PaneButton>
    </PaneHeader>
    <PaneBody>
      <FavoriteList>
        <li>
          <FolderToggle>
            <ChevronDown size={12} strokeWidth={1.6} />
            <Star size={18} strokeWidth={1.3} />
            Favorites bar
          </FolderToggle>
        </li>
        {favorites.map(([icon, text]) => (
          <Favorite key={text}>
            <FavoriteLink href="#"><Site name={icon} /><span>{text}</span></FavoriteLink>
          </Favorite>
        ))}
      </FavoriteList>
      <PaneThumb />
    </PaneBody>
  </Pane>
);

const PolarBear = () => (
  <svg width="50" height="26" viewBox="0 0 50 26" aria-hidden="true">
    <path d="M24 10l5-5 3 2 4-6 5 6 4-5q4 4 4 9v3q-2 7-8 11z" fill="#55659c" />
    <path d="M36 1l2 2 1 2 1.500-.5L42 6l3-4 1.500 1Q43 0 36 1z" fill="#e8b25e" />
    <path d="M1 19q2-6 9-7l-3 5q0 6 8 8Q1 25 1 19z" fill="#a9cdec" />
    <path d="M8 18q3-4 10-4h25q6 1 5 4-4 7-14 7H16q-9-2-8-7z" fill="#5b84bd" />
    <path d="M41 10l8 1q-1 10-9 13z" fill="#8596cc" />
    <path d="M12 7q-.5-2.500 1.500-2.500Q16 3 18.500 4q2-.3 2 2l.5 2q10-4 16-1 4 2 5 8 0 4-3 5l-3-1-2-3q-5 1-8 0l-5 3q-4 1-8 0-2-1 0-2l4-1-2-3q-3-.5-3.500-3z" fill="#f1e8f2" />
    <path d="M37 8q4 2 5 7 0 4-3 5-2 0-2-2 3-4 0-10zM22 15q4 2 8 1l-6 3z" fill="#cdbfdc" />
    <circle cx="14.500" cy="7.500" r="0.700" fill="#333" />
    <circle cx="18" cy="7" r="0.700" fill="#333" />
    <circle cx="16" cy="10" r="1" fill="#333" />
  </svg>
);

const TaskbarView = () => (
  <Taskbar>
    <TaskSide>
      <svg width="28" height="32" viewBox="0 0 28 32" aria-hidden="true">
        <defs>
          <linearGradient id="sun" x1="0" y1="0" x2="1" y2="1">
            <stop offset="0" stopColor="#f5b32e" /><stop offset="1" stopColor="#f06c13" />
          </linearGradient>
        </defs>
        <circle cx="12" cy="17" r="10.500" fill="url(#sun)" />
        <circle cx="19" cy="8" r="8" fill="#c42b1c" />
        <text x="19" y="12" fontSize="11" textAnchor="middle" fill="#fff" fontFamily="Open Sans">1</text>
      </svg>
      <Stack>
        <div>53°F</div>
        <Muted>Sunny</Muted>
      </Stack>
    </TaskSide>
    <TaskApps aria-label="Taskbar">
      <AppButton aria-label="Start">
        <AppArt>
          <path d="M.5.5h11v11H.5z" fill="#36baf5" /><path d="M12.500.5h11v11h-11z" fill="#1fa3ee" />
          <path d="M.5 12.500h11v11H.5z" fill="#1391e4" /><path d="M12.500 12.500h11v11h-11z" fill="#0a77d2" />
        </AppArt>
      </AppButton>
      <SearchBox>
        <Search size={16} strokeWidth={2} color="#333" />
        <HiddenLabel>Search</HiddenLabel>
        <SearchInput placeholder="Search" />
        <PolarBear />
      </SearchBox>
      {appArt.map((a) => (
        <AppButton key={a.label} $active={a.active} aria-label={a.label}>
          <AppArt>{a.art}</AppArt>
        </AppButton>
      ))}
    </TaskApps>
    <TaskSide $end>
      <ChevronUp size={16} strokeWidth={1.6} />
      <svg width="30" height="16" viewBox="0 0 30 16" aria-hidden="true">
        <path d="M10.500 13Q7 13 7 10t3.500-3.200Q11.500 3 15 3t4.500 3.500Q23 7 23 10t-3 3z" fill="#aaa" stroke="#222" strokeWidth="1.200" />
        <path d="M10 12.500l6-4q4-1 4 4z" fill="#eee" />
      </svg>
      <svg width="40" height="18" viewBox="0 0 40 18" aria-hidden="true" fill="none" stroke="#222" strokeWidth="1.200">
        <path d="M10.500 2H3q-1.500 0-1.500 1.500v8Q1.500 13 3 13h9.500q1 0 1-1.500V8M7.500 13v3.500M4 16.500h7M12 1.500h4V6h-4zM14 6v3" />
        <path d="M25 6.500h2.500L31 3.500v11l-3.500-3H25z" />
        <path d="M33 6.500q1.500 2.500 0 5" /><path d="M35.200 4.500q3 4.500 0 9" stroke="#999" />
      </svg>
      <Stack $end>
        <div>11:24 AM</div>
        <div>10/27/2024</div>
      </Stack>
      <svg width="16" height="18" viewBox="0 0 16 18" aria-hidden="true" fill="none" stroke="#222" strokeWidth="1.200" strokeLinejoin="round">
        <path d="M3 12.500V7a5 5 0 0 1 10 0v5.500l1 1.500H2zM6 14.500q2 3 4 0" />
      </svg>
    </TaskSide>
  </Taskbar>
);

export default function App() {
  return (
    <Shell>
      <GlobalStyle />
      <BrowserChrome />
      <Workspace>
        <AssignmentPage />
        <FavoritesPane />
      </Workspace>
      <TaskbarView />
    </Shell>
  );
}
